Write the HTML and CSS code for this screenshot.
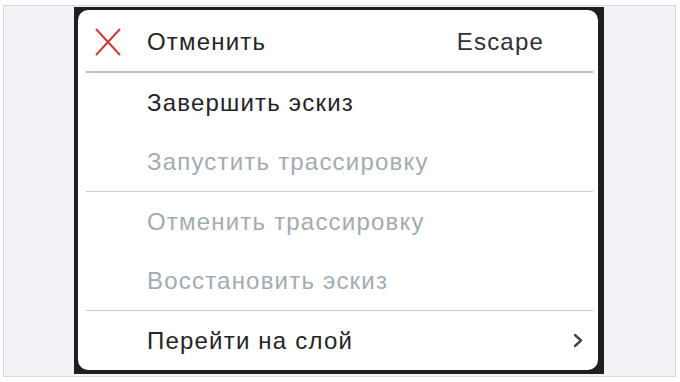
FILE: index.html
```html
<!DOCTYPE html>
<html lang="ru">
<head>
<meta charset="utf-8">
<link rel="stylesheet" href="styles.css">
</head>
<body>
<div class="panel">
  <div class="frame">
    <div class="menu">
      <div class="row">
        <span class="icon">
          <svg width="26" height="28" viewBox="0 0 26 28"><path d="M1 1 L25 27 M25 1 L1 27" stroke="#d0383c" stroke-width="2" fill="none"/></svg>
        </span>
        <span class="label">Отменить</span>
        <span class="shortcut">Escape</span>
      </div>
      <div class="sep sep-strong"></div>
      <div class="row">
        <span class="icon"></span>
        <span class="label">Завершить эскиз</span>
      </div>
      <div class="row disabled">
        <span class="icon"></span>
        <span class="label">Запустить трассировку</span>
      </div>
      <div class="sep"></div>
      <div class="row disabled">
        <span class="icon"></span>
        <span class="label">Отменить трассировку</span>
      </div>
      <div class="row disabled">
        <span class="icon"></span>
        <span class="label">Восстановить эскиз</span>
      </div>
      <div class="sep"></div>
      <div class="row">
        <span class="icon"></span>
        <span class="label">Перейти на слой</span>
        <span class="chevron">
          <svg width="10" height="15" viewBox="0 0 10 15"><path d="M2 2 L8 7.5 L2 13" stroke="#454545" stroke-width="2.4" fill="none" stroke-linecap="round" stroke-linejoin="round"/></svg>
        </span>
      </div>
    </div>
  </div>
</div>
</body>
</html>
```
FILE: styles.css
```css
html, body {
  margin: 0;
  padding: 0;
  background: #ffffff;
}
body {
  width: 680px;
  height: 382px;
  overflow: hidden;
  font-family: "Liberation Sans", Arial, sans-serif;
}
.panel {
  box-sizing: border-box;
  margin: 5px 4px 0 3px;
  height: 372px;
  background: #f3f3f7;
  border: 1px solid #d9d9dd;
  padding: 1px 0 0 70px;
}
.frame {
  box-sizing: border-box;
  width: 530px;
  height: 367px;
  background: #1f1f1f;
  padding: 3px 6px 4px 4px;
}
.menu {
  box-sizing: border-box;
  width: 520px;
  height: 360px;
  background: #ffffff;
  border-radius: 10px;
  padding-top: 2px;
  display: flex;
  flex-direction: column;
}
.row {
  height: 59px;
  display: grid;
  grid-template-columns: 52px 1fr auto;
  align-items: center;
  padding-left: 17px;
  font-size: 24px;
  letter-spacing: 1.2px;
  color: #242428;
}
.row.disabled {
  color: #a3abb3;
}
.icon {
  display: flex;
  align-items: center;
}
.shortcut {
  margin-right: 54px;
  color: #2f2f3a;
}
.chevron {
  display: flex;
  align-items: center;
  margin-right: 15px;
}
.sep {
  height: 1px;
  margin: 0 5px 0 8px;
  background: #c3cfce;
}
.sep.sep-strong {
  height: 2px;
  background: #b3c3c1;
}
```
